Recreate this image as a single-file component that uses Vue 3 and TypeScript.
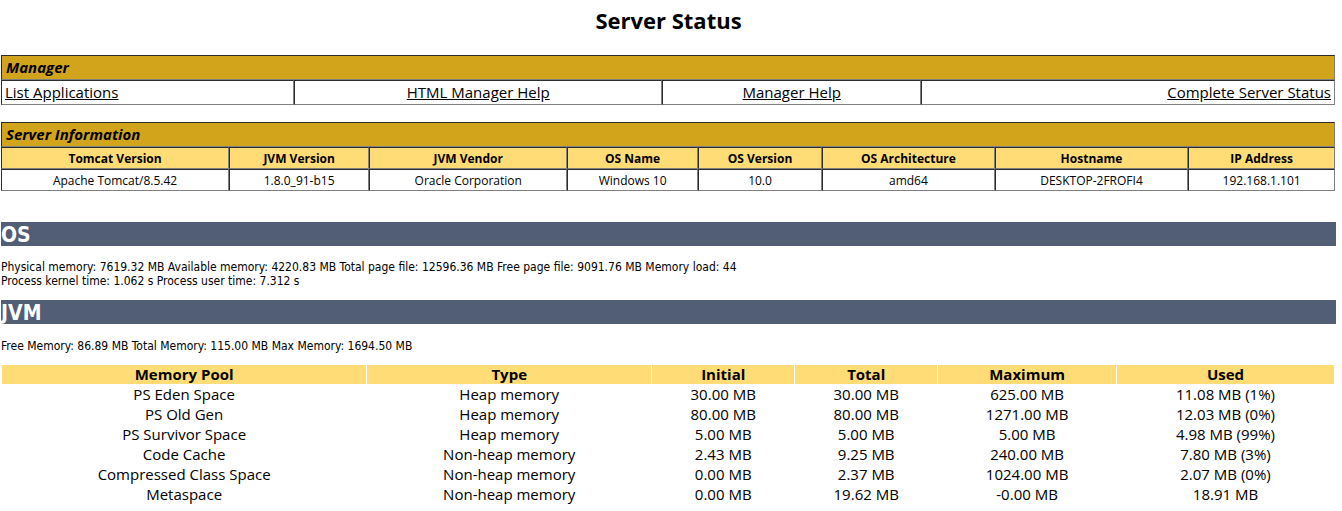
<script setup lang="ts">
interface Column {
  title: string
  width: string
}

interface ManagerLink {
  label: string
  href: string
  align: 'left' | 'center' | 'right'
  width: string
}

interface ServerField extends Column {
  value: string
}

const managerLinks: ManagerLink[] = [
  { label: 'List Applications', href: '#list', align: 'left', width: '22%' },
  { label: 'HTML Manager Help', href: '#html-help', align: 'center', width: '27.55%' },
  { label: 'Manager Help', href: '#help', align: 'center', width: '19.45%' },
  { label: 'Complete Server Status', href: '#all', align: 'right', width: '31%' },
]

const serverFields: ServerField[] = [
  { title: 'Tomcat Version', value: 'Apache Tomcat/8.5.42', width: '17.1%' },
  { title: 'JVM Version', value: '1.8.0_91-b15', width: '10.5%' },
  { title: 'JVM Vendor', value: 'Oracle Corporation', width: '14.85%' },
  { title: 'OS Name', value: 'Windows 10', width: '9.8%' },
  { title: 'OS Version', value: '10.0', width: '9.3%' },
  { title: 'OS Architecture', value: 'amd64', width: '12.95%' },
  { title: 'Hostname', value: 'DESKTOP-2FROFI4', width: '14.5%' },
  { title: 'IP Address', value: '192.168.1.101', width: '11%' },
]

const poolColumns: Column[] = [
  { title: 'Memory Pool', width: '27.45%' },
  { title: 'Type', width: '21.4%' },
  { title: 'Initial', width: '10.7%' },
  { title: 'Total', width: '10.7%' },
  { title: 'Maximum', width: '13.4%' },
  { title: 'Used', width: '16.35%' },
]

const pools: string[][] = [
  ['PS Eden Space', 'Heap memory', '30.00 MB', '30.00 MB', '625.00 MB', '11.08 MB (1%)'],
  ['PS Old Gen', 'Heap memory', '80.00 MB', '80.00 MB', '1271.00 MB', '12.03 MB (0%)'],
  ['PS Survivor Space', 'Heap memory', '5.00 MB', '5.00 MB', '5.00 MB', '4.98 MB (99%)'],
  ['Code Cache', 'Non-heap memory', '2.43 MB', '9.25 MB', '240.00 MB', '7.80 MB (3%)'],
  ['Compressed Class Space', 'Non-heap memory', '0.00 MB', '2.37 MB', '1024.00 MB', '2.07 MB (0%)'],
  ['Metaspace', 'Non-heap memory', '0.00 MB', '19.62 MB', '-0.00 MB', '18.91 MB'],
]
</script>

<template>
  <main class="page">
    <h1 class="title">Server Status</h1>

    <table class="grid">
      <colgroup>
        <col v-for="link in managerLinks" :key="link.label" :style="{ width: link.width }" />
      </colgroup>
      <tbody>
        <tr>
          <th class="section" colspan="4" scope="colgroup">Manager</th>
        </tr>
        <tr>
          <td v-for="link in managerLinks" :key="link.label" class="link-cell" :class="link.align">
            <a :href="link.href">{{ link.label }}</a>
          </td>
        </tr>
      </tbody>
    </table>

    <table class="grid">
      <colgroup>
        <col v-for="field in serverFields" :key="field.title" :style="{ width: field.width }" />
      </colgroup>
      <tbody>
        <tr>
          <th class="section" colspan="8" scope="colgroup">Server Information</th>
        </tr>
        <tr>
          <th v-for="field in serverFields" :key="field.title" class="field-title" scope="col">{{ field.title }}</th>
        </tr>
        <tr>
          <td v-for="field in serverFields" :key="field.title" class="field-value">{{ field.value }}</td>
        </tr>
      </tbody>
    </table>

    <h2 class="bar os-bar">OS</h2>
    <p class="facts">
      Physical memory: 7619.32 MB Available memory: 4220.83 MB Total page file: 12596.36 MB Free page file: 9091.76 MB Memory load: 44<br />
      Process kernel time: 1.062 s Process user time: 7.312 s
    </p>

    <h2 class="bar">JVM</h2>
    <p class="facts jvm-facts">Free Memory: 86.89 MB Total Memory: 115.00 MB Max Memory: 1694.50 MB</p>

    <table class="pools">
      <colgroup>
        <col v-for="column in poolColumns" :key="column.title" :style="{ width: column.width }" />
      </colgroup>
      <thead>
        <tr>
          <th v-for="column in poolColumns" :key="column.title" scope="col">{{ column.title }}</th>
        </tr>
      </thead>
      <tbody>
        <tr v-for="pool in pools" :key="pool[0]">
          <td v-for="(cell, index) in pool" :key="index">{{ cell }}</td>
        </tr>
      </tbody>
    </table>
  </main>
</template>

<style>
body {
  background: #fff;
}
</style>

<style scoped>
.page {
  padding: 5px 6px 0 1px;
  color: #000;
  font-family: "Open Sans", "Noto Sans", sans-serif;
}

.title {
  margin: 0 0 20px;
  font-size: 22px;
  line-height: 30px;
  text-align: center;
}

.grid,
.pools {
  width: calc(100% - 1px);
  table-layout: fixed;
}

.grid {
  margin-bottom: 17px;
  border-collapse: separate;
  border-spacing: 0;
}

.grid th,
.grid td {
  padding: 0 3px;
  border: 1px solid;
  border-color: #2c2c2c #808080 #808080 #2c2c2c;
}

.grid .section {
  padding: 0 4px;
  background: #d2a41c;
  font-size: 15px;
  font-style: italic;
  line-height: 23px;
  text-align: left;
}

.link-cell {
  font-size: 15px;
  line-height: 23px;
}

.link-cell a {
  color: #000;
  text-decoration: underline;
}

.left {
  text-align: left;
}

.center {
  text-align: center;
}

.right {
  text-align: right;
}

.grid .field-title,
.grid .field-value {
  padding-top: 2px;
  font-size: 12px;
  line-height: 18px;
  text-align: center;
}

.field-title {
  background: #ffdc75;
}

.bar {
  margin: 0;
  padding-top: 2px;
  background: #525d76;
  color: #fff;
  font-family: "DejaVu Sans Condensed", "DejaVu Sans", sans-serif;
  font-size: 21px;
  line-height: 22px;
}

.os-bar {
  margin-top: 31px;
}

.facts {
  margin: 14px 0 12px;
  font-family: "DejaVu Sans Condensed", "DejaVu Sans", sans-serif;
  font-size: 12px;
  line-height: 14px;
}

.jvm-facts {
  margin: 15px 0 11px;
}

.pools {
  border-collapse: separate;
  border-spacing: 1px;
  font-size: 15px;
  line-height: 19px;
  text-align: center;
}

.pools th,
.pools td {
  padding: 0;
}

.pools th {
  background: #ffdc75;
}
</style>
